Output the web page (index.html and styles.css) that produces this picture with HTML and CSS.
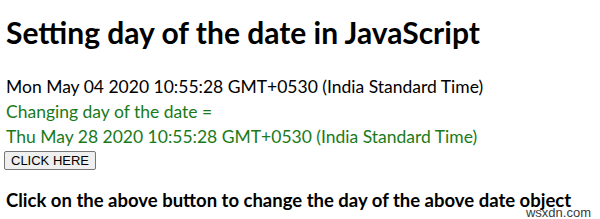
FILE: index.html
```html
<!DOCTYPE html>
<html lang="en">
<head>
    <meta charset="UTF-8">
    <title>Setting day of the date in JavaScript</title>
    <link rel="stylesheet" href="styles.css">
</head>
<body>
    <h1>Setting day of the date in JavaScript</h1>
    <div class="sample">Mon May 04 2020 10:55:28 GMT+0530 (India Standard Time)</div>
    <div class="result">Changing day of the date = <br>Thu May 28 2020 10:55:28 GMT+0530 (India Standard Time)</div>
    <button class="btn">CLICK HERE</button>
    <h3>Click on the above button to change the day of the above date object</h3>
    <span class="mark">wsxdn.com</span>
</body>
</html>
```

FILE: styles.css
```css
body {
    font-family: Lato, sans-serif;
    margin: 0;
    padding: 0 6px;
    color: #000;
    background: #fff;
    position: relative;
    height: 219px;
    overflow: hidden;
}
h1 {
    font-size: 30px;
    margin: 14px 0 24px;
    line-height: 36px;
}
.sample, .result {
    font-size: 17.5px;
    line-height: 25px;
}
.result {
    color: #1a7a1a;
}
.btn {
    font-family: 'Liberation Sans', Arial, sans-serif;
    font-size: 13px;
    margin: -2px 0 0 -2px;
    padding: 1px 6px;
    background: #efefef;
    border: 1px solid #767676;
    border-radius: 2px;
}
h3 {
    font-size: 18.5px;
    margin: 21px 0 0;
    line-height: 18px;
}
.mark {
    position: absolute;
    right: 9px;
    bottom: 0;
    font-family: 'Liberation Sans', Arial, sans-serif;
    font-size: 13px;
    line-height: 12px;
    color: #3a3a3a;
}
```
